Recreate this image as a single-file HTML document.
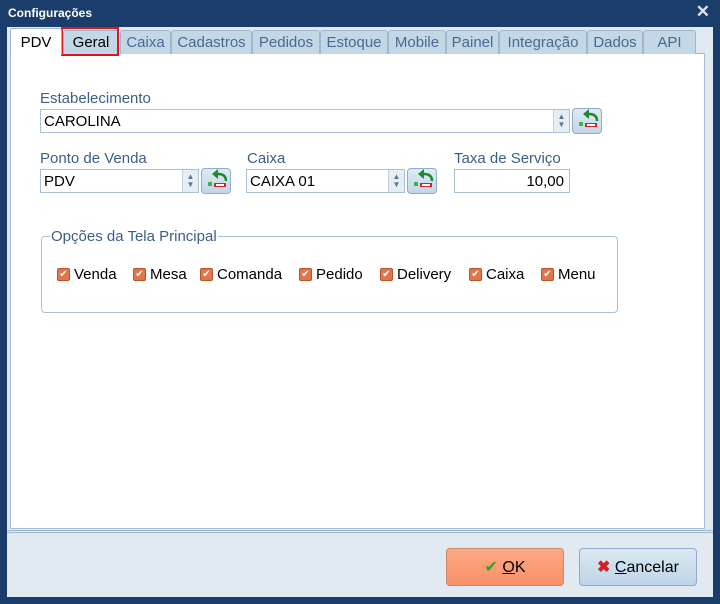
<!DOCTYPE html><html><head><style>
*{box-sizing:border-box;margin:0;padding:0}
body{width:720px;height:604px;background:#1b3d6b;font-family:"Liberation Sans",sans-serif;position:relative;overflow:hidden}
.a{position:absolute}
.title{left:8px;top:6px;color:#fff;font-size:12px;font-weight:bold}
.client{left:7px;top:27px;width:706px;height:570px;background:#e1e9f1}
.panel{left:10px;top:53px;width:695px;height:476px;background:#fff;border:1px solid #a7bdd2;border-top:1px solid #9fb6cc}
.sep{left:7px;top:530px;width:706px;height:3px;border-top:1px solid #9fb6cc;border-bottom:1px solid #9fb6cc}
.tab{top:30px;height:24px;background:#c4d7e6;border:1px solid #9fb6cc;border-bottom:none;border-radius:3px 3px 0 0;color:#4a6a8f;font-size:15px;text-align:center;line-height:24px}
.lbl{color:#3d5e86;font-size:15px}
.inp{background:#fff;border:1px solid #a9c1d8;height:24px;font-size:15px;line-height:24px;padding-left:3px;color:#000}
.spin{position:absolute;right:0;top:0;width:16px;height:22px;background:#e6eef5;border-left:1px solid #c0d1e0;color:#5a7390;font-size:8px;line-height:8px;text-align:center;padding-top:3px}
.btn{width:30px;height:26px;border:1px solid #8eaccb;border-radius:4px;background:linear-gradient(#dfeaf4,#c2d6e8)}
.cb{display:inline-block;width:13px;height:13px;background:#e0764a;border:1px solid #b65530;border-radius:2px;color:#fff;font-size:10px;line-height:11px;text-align:center;margin-right:4px}
.opt{font-size:15px;color:#000;top:264px;height:20px;display:flex;align-items:center}
</style></head><body>
<div class="a title">Configurações</div>
<div class="a" style="right:10px;top:2px;color:#dbe5ef;font-size:17px;font-weight:bold">✕</div>
<div class="a client"></div>
<div class="a panel"></div>
<div class="a sep"></div>
<div class="a tab" style="left:120px;width:51px">Caixa</div>
<div class="a tab" style="left:171px;width:81px">Cadastros</div>
<div class="a tab" style="left:252px;width:68px">Pedidos</div>
<div class="a tab" style="left:320px;width:68px">Estoque</div>
<div class="a tab" style="left:388px;width:58px">Mobile</div>
<div class="a tab" style="left:446px;width:53px">Painel</div>
<div class="a tab" style="left:499px;width:88px">Integração</div>
<div class="a tab" style="left:587px;width:56px">Dados</div>
<div class="a tab" style="left:643px;width:53px">API</div>
<div class="a tab" style="left:63px;width:56px;color:#000">Geral</div>
<div class="a" style="left:61px;top:27px;width:58px;height:29px;border:2px solid #e0141e"></div>
<div class="a tab" style="left:10px;top:28px;width:52px;height:27px;background:#fff;color:#000;line-height:28px">PDV</div>

<div class="a lbl" style="left:40px;top:90px">Estabelecimento</div>
<div class="a inp" style="left:40px;top:109px;width:530px">CAROLINA<div class="spin">▲<br>▼</div></div>
<div class="a btn" style="left:572px;top:108px"></div>
<div class="a lbl" style="left:40px;top:150px">Ponto de Venda</div>
<div class="a inp" style="left:40px;top:169px;width:159px">PDV<div class="spin">▲<br>▼</div></div>
<div class="a btn" style="left:201px;top:168px"></div>
<div class="a lbl" style="left:247px;top:150px">Caixa</div>
<div class="a inp" style="left:246px;top:169px;width:159px">CAIXA 01<div class="spin">▲<br>▼</div></div>
<div class="a btn" style="left:407px;top:168px"></div>
<div class="a lbl" style="left:454px;top:150px">Taxa de Serviço</div>
<div class="a inp" style="left:454px;top:169px;width:116px;text-align:right;padding-right:5px">10,00</div>
<svg class="a" style="left:0;top:0" width="720" height="300">
<g id="ic"><path d="M597 121 q0-7 -8-7 l-2 0" stroke="#1f8a2a" stroke-width="2.5" fill="none"/><polygon points="583,114 589,109 589,119" fill="#1f8a2a"/><rect x="579" y="122" width="4" height="4" fill="#3bb548"/><rect x="585" y="123" width="12" height="4" fill="#d6232a"/><rect x="587" y="124" width="8" height="2" fill="#fff"/></g>
<use href="#ic" x="-371" y="60"/><use href="#ic" x="-165" y="60"/>
</svg>
<div class="a" style="left:41px;top:236px;width:577px;height:77px;border:1px solid #a9c1d8;border-radius:4px"></div>
<div class="a lbl" style="left:50px;top:228px;background:#fff;padding:0 1px">Opções da Tela Principal</div>
<div class="a opt" style="left:57px"><span class="cb">✔</span>Venda</div>
<div class="a opt" style="left:133px"><span class="cb">✔</span>Mesa</div>
<div class="a opt" style="left:200px"><span class="cb">✔</span>Comanda</div>
<div class="a opt" style="left:299px"><span class="cb">✔</span>Pedido</div>
<div class="a opt" style="left:380px"><span class="cb">✔</span>Delivery</div>
<div class="a opt" style="left:469px"><span class="cb">✔</span>Caixa</div>
<div class="a opt" style="left:541px"><span class="cb">✔</span>Menu</div>

<div class="a" style="left:446px;top:548px;width:118px;height:38px;border:1px solid #c98a6c;border-radius:4px;background:linear-gradient(#fdaa84,#f89068);font-size:16px;text-align:center;line-height:38px"><span style="color:#2aa52a">✔</span> <u>O</u>K</div>
<div class="a" style="left:579px;top:548px;width:118px;height:38px;border:1px solid #8eaccb;border-radius:4px;background:linear-gradient(#dbe8f3,#bed5e7);font-size:16px;text-align:center;line-height:38px"><span style="color:#d61f1f;font-weight:bold">✖</span> <u>C</u>ancelar</div>
</body></html>
